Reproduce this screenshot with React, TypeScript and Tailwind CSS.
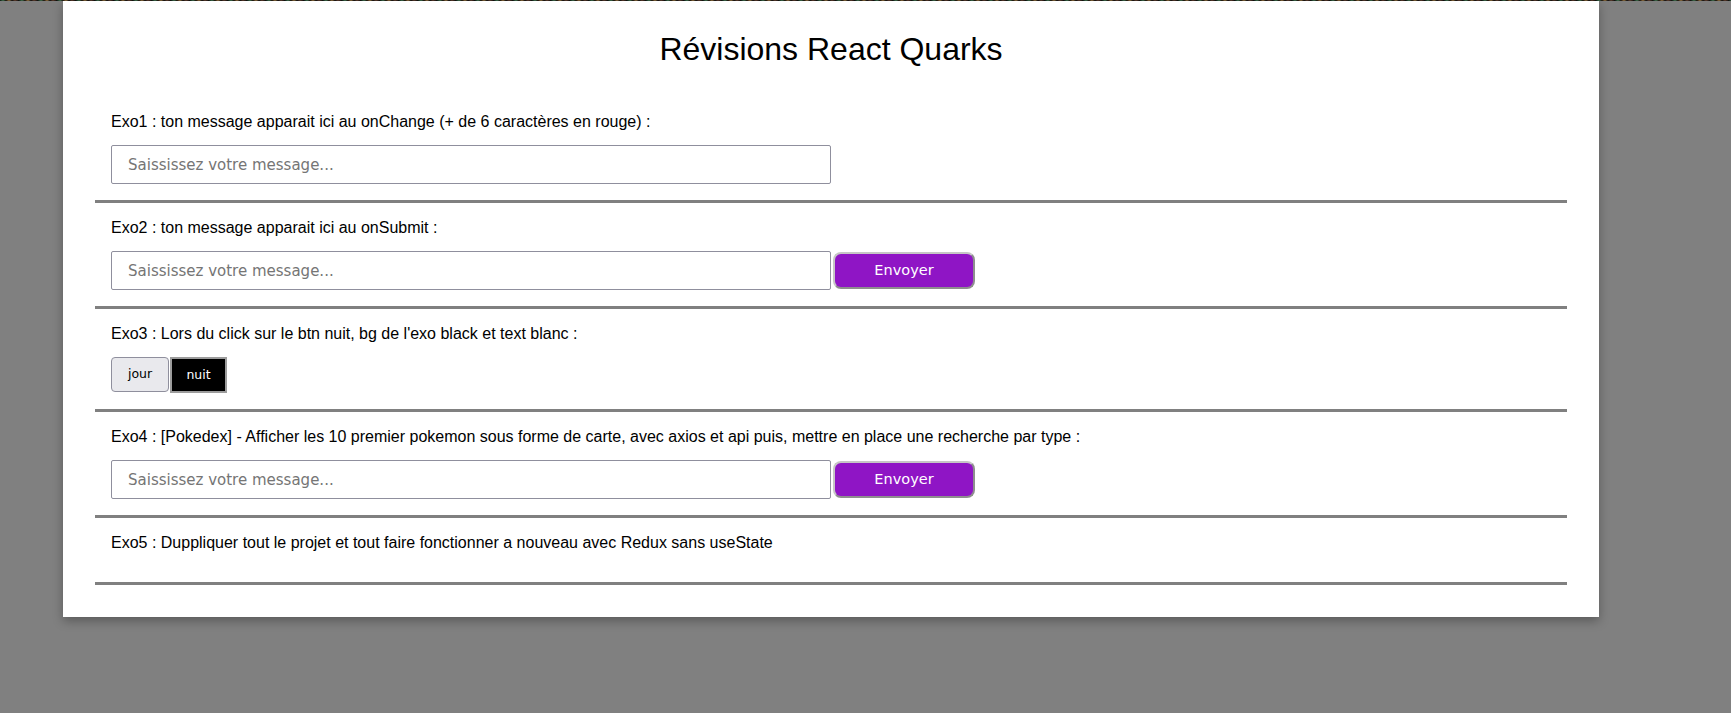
// Page de révisions React : quelques petits exercices empilés dans une carte blanche

import { useState } from "react"
import type { FormEvent } from "react"

const sectionClass = "px-4 py-4 border-b-[3px] border-[#808080]"
const labelClass = "text-base leading-[18px] mb-[14px] text-black"
const inputClass = "w-1/2 h-[39px] border border-[#8f8f9d] rounded-[2px] pl-4 bg-white font-['DejaVu_Sans',sans-serif] text-[15px] text-black placeholder:text-[#757575] outline-none"
const sendClass = "ml-[2px] w-[142px] h-[37px] rounded-[8px] border-2 border-t-[#c6c6c6] border-l-[#c6c6c6] border-b-[#8e8e8e] border-r-[#8e8e8e] bg-[#8f15c5] text-white font-['DejaVu_Sans',sans-serif] text-[14.5px] cursor-pointer"

export default function App() {
    // Exo1 : message tapé en direct
    const [liveMsg, setLiveMsg] = useState("")
    // Exo2 : message envoyé au submit
    const [draft, setDraft] = useState("")
    const [sentMsg, setSentMsg] = useState("")
    // Exo3 : mode jour / nuit
    const [night, setNight] = useState(false)
    // Exo4 : recherche par type
    const [typeSearch, setTypeSearch] = useState("")

    const onSubmit = (e: FormEvent) => {
        e.preventDefault()
        setSentMsg(draft)
    }

    return (
        <div className="min-h-screen bg-[#808080] font-['Liberation_Sans',Arial,sans-serif]">
            {/* fine bande en haut de la page */}
            <div className="h-px w-full bg-[repeating-linear-gradient(90deg,#0e1a12_0px,#3c6b4a_3px,#1a120c_6px,#8a6a3a_9px,#101010_12px,#5a3a2a_15px,#0c0c0c_19px)]" />

            <div className="ml-[63px] w-[1536px] bg-white px-8 pt-8 pb-8 shadow-[0_4px_10px_rgba(0,0,0,0.3)]">
                <h1 className="text-[32px] leading-none text-center text-black mb-8">Révisions React Quarks</h1>

                <section className={sectionClass}>
                    <p className={labelClass}>
                        Exo1 : ton message apparait ici au onChange (+ de 6 caractères en rouge) :
                        {liveMsg && <span className={liveMsg.length > 6 ? "text-red-600 ml-1" : "ml-1"}>{liveMsg}</span>}
                    </p>
                    <div className="flex">
                        <input
                            className={inputClass}
                            placeholder="Saississez votre message..."
                            value={liveMsg}
                            onChange={(e) => setLiveMsg(e.target.value)}
                        />
                    </div>
                </section>

                <section className={sectionClass}>
                    <p className={labelClass}>
                        Exo2 : ton message apparait ici au onSubmit :
                        {sentMsg && <span className="ml-1">{sentMsg}</span>}
                    </p>
                    <form className="flex items-center" onSubmit={onSubmit}>
                        <input
                            className={inputClass}
                            placeholder="Saississez votre message..."
                            value={draft}
                            onChange={(e) => setDraft(e.target.value)}
                        />
                        <button type="submit" className={sendClass}>Envoyer</button>
                    </form>
                </section>

                <section className={`${sectionClass} ${night ? "bg-black" : ""}`}>
                    <p className={`${labelClass} ${night ? "!text-white" : ""}`}>
                        Exo3 : Lors du click sur le btn nuit, bg de l'exo black et text blanc :
                    </p>
                    <div className="flex items-start font-['DejaVu_Sans',sans-serif] text-[12.5px]">
                        <button
                            type="button"
                            onClick={() => setNight(false)}
                            className="w-[58px] h-[35px] bg-[#e9e9ed] border border-[#8f8f9d] rounded-[4px] text-black cursor-pointer"
                        >
                            jour
                        </button>
                        <button
                            type="button"
                            onClick={() => setNight(true)}
                            className="ml-px w-[57px] h-[36px] bg-black border-2 border-[#9c9c9c] text-white cursor-pointer"
                        >
                            nuit
                        </button>
                    </div>
                </section>

                <section className={sectionClass}>
                    <p className={labelClass}>
                        Exo4 : [Pokedex] - Afficher les 10 premier pokemon sous forme de carte, avec axios et api puis, mettre en place une recherche par type :
                    </p>
                    <form className="flex items-center" onSubmit={(e) => e.preventDefault()}>
                        <input
                            className={inputClass}
                            placeholder="Saississez votre message..."
                            value={typeSearch}
                            onChange={(e) => setTypeSearch(e.target.value)}
                        />
                        <button type="submit" className={sendClass}>Envoyer</button>
                    </form>
                </section>

                <section className={sectionClass}>
                    <p className={labelClass}>
                        Exo5 : Duppliquer tout le projet et tout faire fonctionner a nouveau avec Redux sans useState
                    </p>
                </section>
            </div>
        </div>
    )
}
